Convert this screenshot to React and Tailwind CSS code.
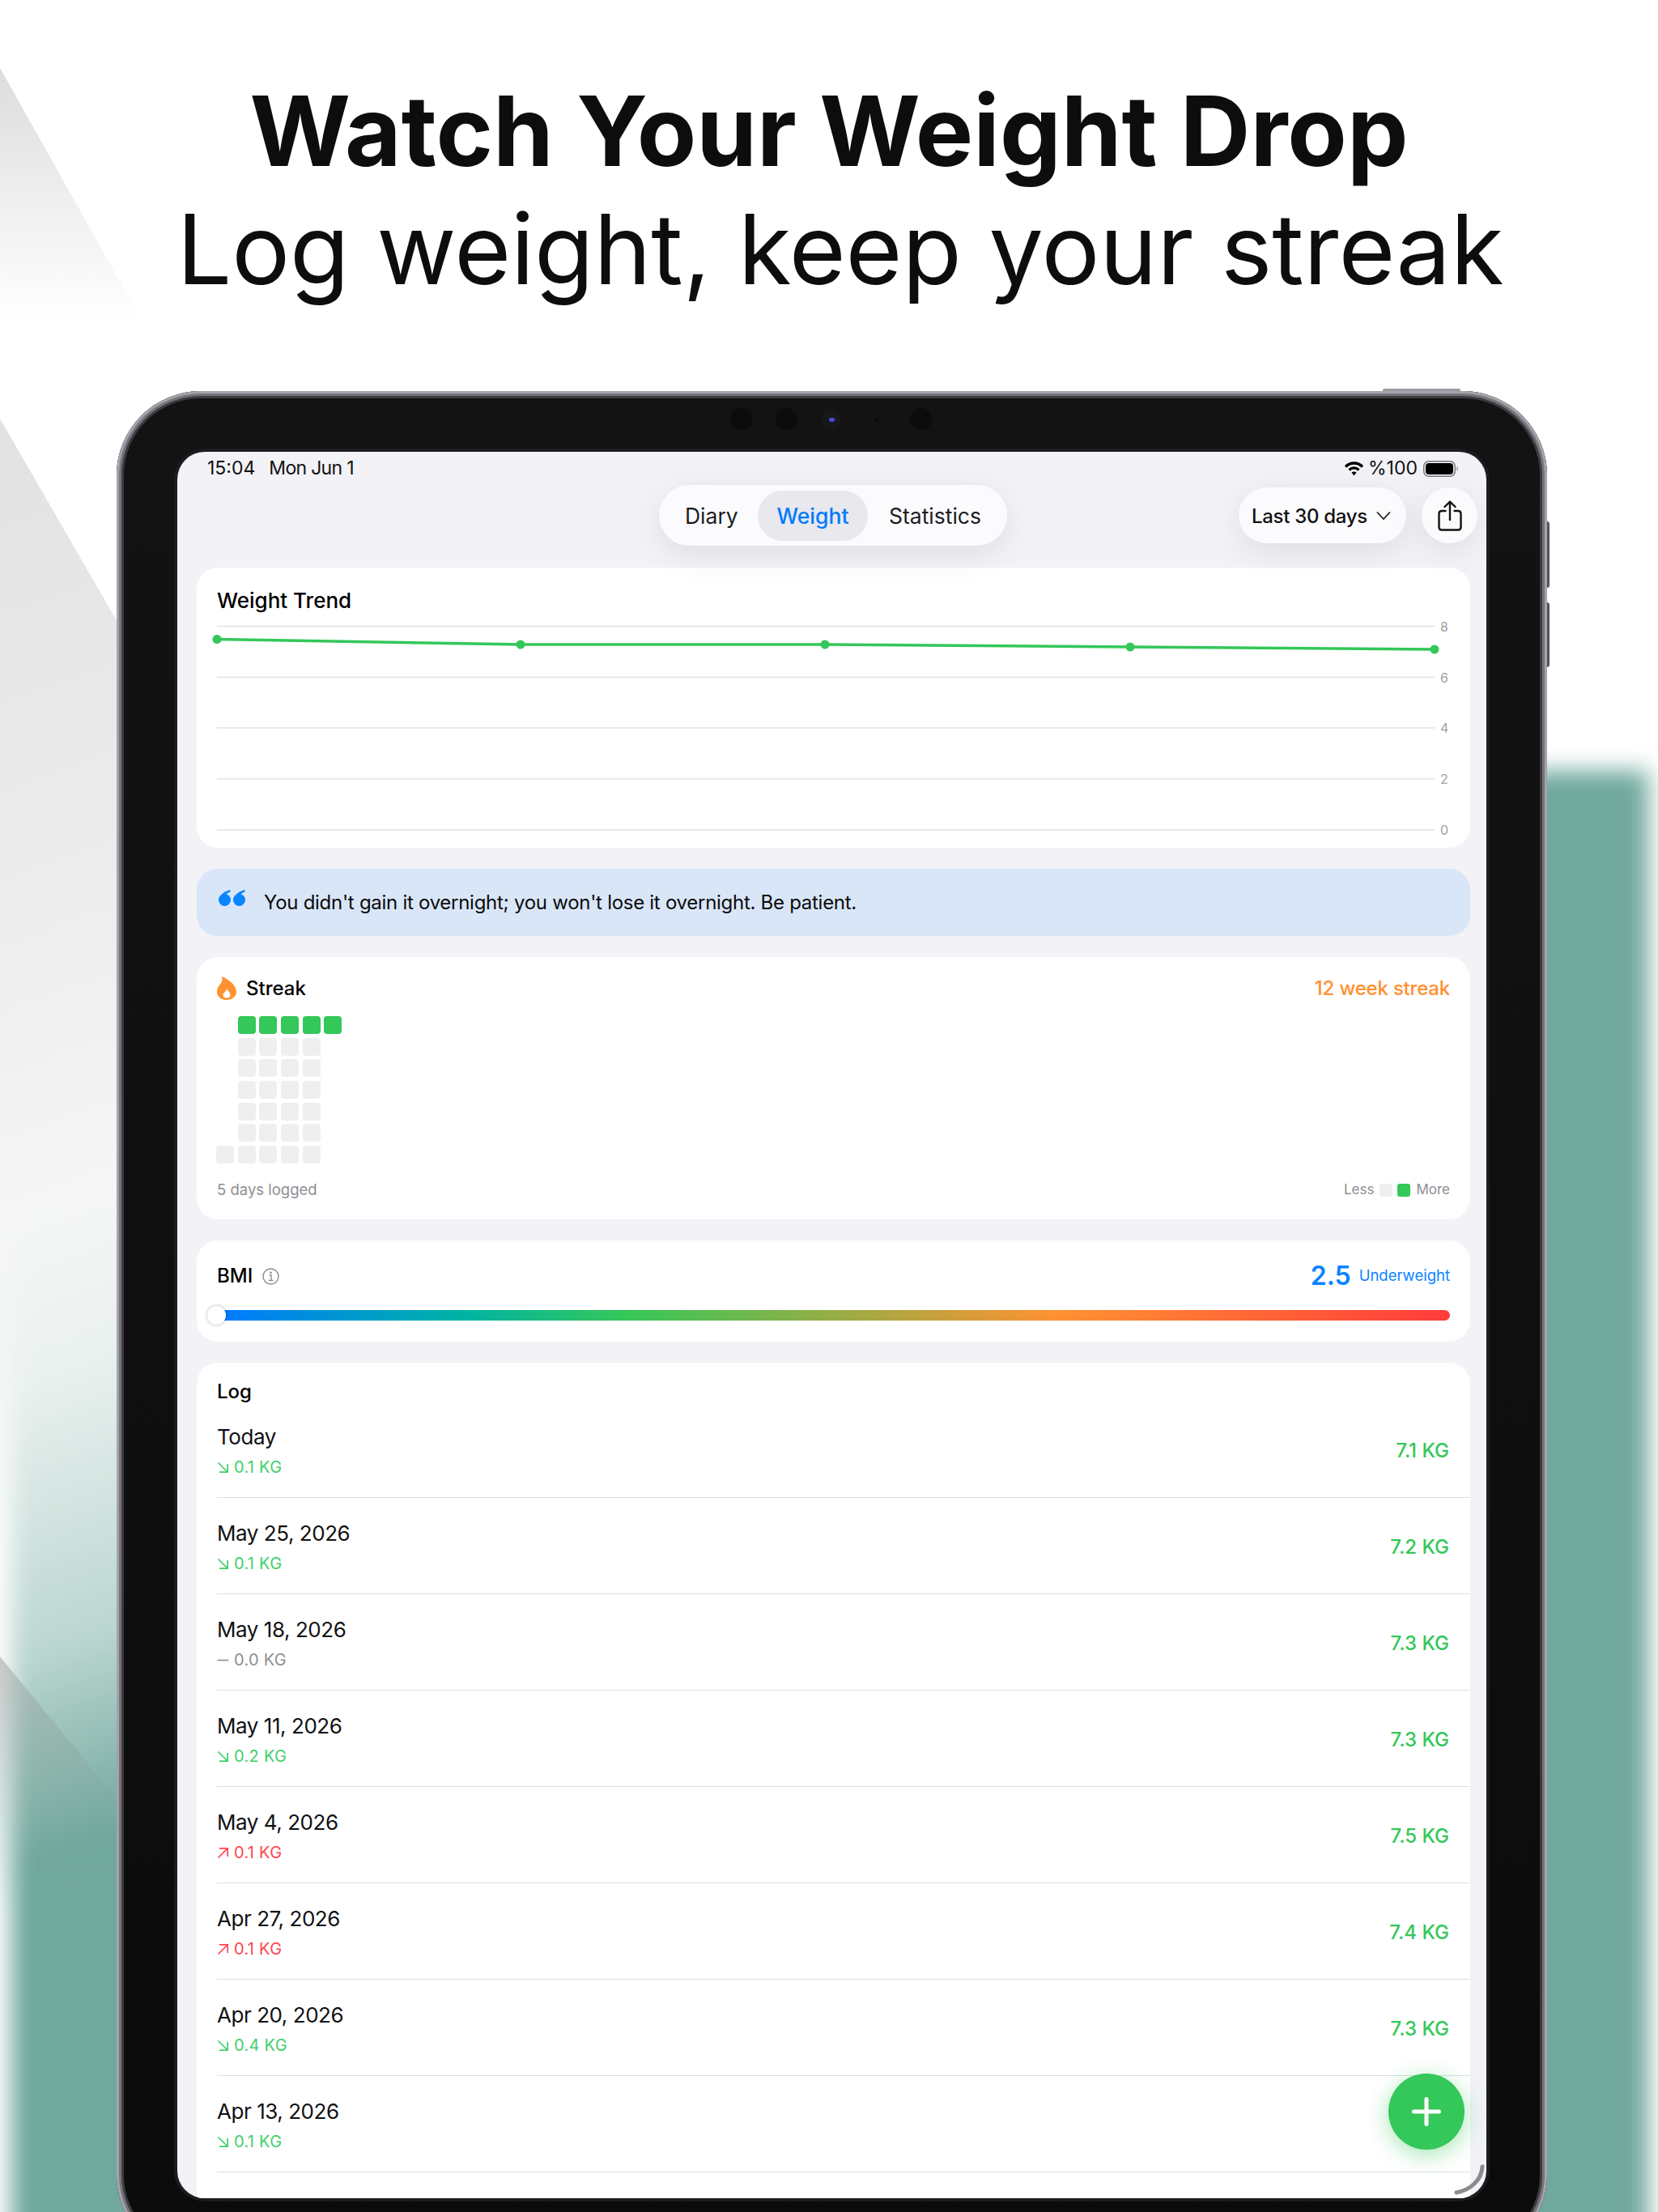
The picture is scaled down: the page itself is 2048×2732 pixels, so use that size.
import React from "react";

const rows = [
  { d: "Today", t: "down", s: "0.1 KG", v: "7.1 KG" },
  { d: "May 25, 2026", t: "down", s: "0.1 KG", v: "7.2 KG" },
  { d: "May 18, 2026", t: "flat", s: "0.0 KG", v: "7.3 KG" },
  { d: "May 11, 2026", t: "down", s: "0.2 KG", v: "7.3 KG" },
  { d: "May 4, 2026", t: "up", s: "0.1 KG", v: "7.5 KG" },
  { d: "Apr 27, 2026", t: "up", s: "0.1 KG", v: "7.4 KG" },
  { d: "Apr 20, 2026", t: "down", s: "0.4 KG", v: "7.3 KG" },
  { d: "Apr 13, 2026", t: "down", s: "0.1 KG", v: "" },
];

function Backdrop() {
  return (
    <svg className="absolute left-0 top-0 block w-[2048px] h-[2732px]" viewBox="0 0 2048 2732">
      <defs>
        <filter id="soft" x="-5%" y="-5%" width="110%" height="110%">
          <feGaussianBlur stdDeviation="14" />
        </filter>
        <linearGradient id="s1" x1="0" y1="84" x2="0" y2="400" gradientUnits="userSpaceOnUse">
          <stop offset="0" stopColor="#dcdcdc" />
          <stop offset="0.6" stopColor="#f2f2f2" />
          <stop offset="1" stopColor="#ffffff" />
        </linearGradient>
        <linearGradient id="s2" x1="0" y1="517" x2="600" y2="2240" gradientUnits="userSpaceOnUse">
          <stop offset="0" stopColor="#e2e2e2" />
          <stop offset="0.3" stopColor="#ececec" />
          <stop offset="0.52" stopColor="#f5f6f6" />
          <stop offset="0.62" stopColor="#f4f7f6" stopOpacity="0.92" />
          <stop offset="0.8" stopColor="#ffffff" stopOpacity="0.52" />
          <stop offset="0.93" stopColor="#ffffff" stopOpacity="0" />
        </linearGradient>
        <linearGradient id="s3" x1="0" y1="2046" x2="60" y2="2360" gradientUnits="userSpaceOnUse">
          <stop offset="0" stopColor="#9a9a9a" stopOpacity="0.5" />
          <stop offset="1" stopColor="#6fa89d" stopOpacity="0" />
        </linearGradient>
      </defs>
      <rect x="0" y="0" width="2048" height="2732" fill="#ffffff" />
      <rect x="14" y="952" width="2022" height="1900" fill="#6fa89d" filter="url(#soft)" />
      <polygon points="0,84 200,440 0,440" fill="url(#s1)" />
      <polygon points="0,517 700,1730 700,2400 0,2400" fill="url(#s2)" />
      <polygon points="0,2046 200,2290 200,2500 0,2500" fill="url(#s3)" />
    </svg>
  );
}

function Chart() {
  const ys = [
    [8, 773.5],
    [6, 836.5],
    [4, 899],
    [2, 962],
    [0, 1025],
  ];
  const pts = [
    [25, 21.5],
    [400, 28],
    [776, 28],
    [1153, 31],
    [1529, 34],
  ];
  return (
    <svg className="block w-[1573px] h-[279px]" viewBox="0 -8 1573 279">
      {ys.map(([l, y]) => (
        <g key={l}>
          <line x1="25" x2="1529" y1={y - 768} y2={y - 768} stroke="#e2e2e4" strokeWidth="1.5" />
          <text x="1536" y={y - 768 + 6} fontSize="16" fill="#a0a0a4" fontFamily="Inter">{l}</text>
        </g>
      ))}
      <polyline points={pts.map((p) => p.join(",")).join(" ")} fill="none" stroke="#34c759" strokeWidth="3.5" />
      {pts.map((p) => (
        <circle key={p[0]} cx={p[0]} cy={p[1]} r="5.5" fill="#34c759" />
      ))}
    </svg>
  );
}

function Arrow({ t }) {
  if (t === "flat")
    return (
      <svg className="block w-[15px] h-[15px]" viewBox="0 0 15 15">
        <line x1="0.5" x2="14.5" y1="7.5" y2="7.5" stroke="#8e8e93" strokeWidth="1.6" />
      </svg>
    );
  const c = t === "up" ? "#ff4550" : "#42cf6b";
  return (
    <svg className="block w-[15px] h-[15px]" viewBox="0 0 15 15" fill="none" stroke={c} strokeWidth="1.7">
      {t === "down" ? <path d="M1.5 1.5 L13 13 M13.2 3 V13.2 H3" /> : <path d="M1.5 13.5 L13 2 M3 1.8 H13.2 V12" />}
    </svg>
  );
}

function Row({ r }) {
  const color = r.t === "flat" ? "text-[#8e8e93]" : r.t === "up" ? "text-[#ff4550]" : "text-[#42cf6b]";
  return (
    <div className="ml-[25px] pr-[26px] h-[119px] border-b-[1.5px] border-[#dedee0] flex justify-between items-center">
      <div className="self-start pt-[27px]">
        <div className="text-[26px] tracking-[-0.45px] leading-[34px] text-[#111113]">{r.d}</div>
        <div className={`mt-[9px] flex items-center gap-[6px] text-[20px] tracking-[0.3px] leading-[23px] ${color}`}>
          <Arrow t={r.t} />
          <span>{r.s}</span>
        </div>
      </div>
      <div className="pt-[3px] text-[24px] font-medium text-[#34c759]">{r.v}</div>
    </div>
  );
}

function Cell({ k }) {
  if (k === 0) return <div className="w-[22px] h-[22px]" />;
  return <div className={`w-[22px] h-[22px] rounded-[4px] ${k === 2 ? "bg-[#34c759]" : "bg-[#efeff0]"}`} />;
}

const grid = [
  [0, 2, 2, 2, 2, 2],
  [0, 1, 1, 1, 1, 0],
  [0, 1, 1, 1, 1, 0],
  [0, 1, 1, 1, 1, 0],
  [0, 1, 1, 1, 1, 0],
  [0, 1, 1, 1, 1, 0],
  [1, 1, 1, 1, 1, 0],
];

export default function App() {
  return (
    <div className="relative w-[2048px] h-[2732px] overflow-hidden bg-white font-['Inter',sans-serif]">
      <Backdrop />
      <div className="relative pt-[89px] text-center text-[#0d0d0d]">
        <h1 className="text-[120px] leading-[146px] font-bold">Watch Your Weight Drop</h1>
        <p className="pl-[28px] text-[120px] leading-[145px] font-normal tracking-[-0.1px]">Log weight, keep your streak</p>
      </div>

      {/* device */}
      <div className="relative mt-[103px] ml-[144px] w-[1767px] h-[2307px]">
        <div className="absolute left-[1564px] top-[-3px] w-[96px] h-[8px] rounded-t-[2px] bg-[#9b9ba0]" />
        <div className="absolute right-[-3px] top-[161px] w-[8px] h-[82px] rounded-r-[3px] bg-[#55555b]" />
        <div className="absolute right-[-3px] top-[261px] w-[8px] h-[80px] rounded-r-[3px] bg-[#55555b]" />
        <div className="relative w-full h-full rounded-[104px] p-[75px] bg-gradient-to-b from-[#131313] to-[#0b0b0b] shadow-[inset_0_0_0_3px_#a4a4aa,inset_0_0_0_6px_#74747a,inset_0_0_0_9px_#3c3c40]">
          {/* cameras */}
          <div className="absolute left-[758px] top-[21px] w-[27px] h-[27px] rounded-full bg-[#0c0c0c]" />
          <div className="absolute left-[814px] top-[21px] w-[27px] h-[27px] rounded-full bg-[#0c0c0c]" />
          <div className="absolute left-[871px] top-[23px] w-[24px] h-[24px] rounded-full bg-[#18181c] flex items-center justify-center">
            <div className="w-[7px] h-[5px] rounded-full bg-[#4a4ad8]" />
          </div>
          <div className="absolute left-[936px] top-[32px] w-[6px] h-[6px] rounded-full bg-[#0c0c0c]" />
          <div className="absolute left-[980px] top-[21px] w-[27px] h-[27px] rounded-full bg-[#0c0c0c]" />

          <div className="relative w-full h-full rounded-[34px] overflow-hidden bg-[#f2f2f7] shadow-[0_0_0_4px_#1c1c1e] text-black">
            {/* status bar */}
            <div className="h-[41px] pl-[37px] pr-[34px] flex items-center justify-between text-[23px] text-[#111]">
              <div className="flex gap-[17px]">
                <span>15:04</span>
                <span className="tracking-[-0.7px]">Mon Jun 1</span>
              </div>
              <div className="flex items-center gap-[5px]">
                <svg className="block w-[25px] h-[20px]" viewBox="0 0 25 20" fill="none" stroke="#000" strokeLinecap="butt">
                  <path d="M2 7.5 C8 1.5 17 1.5 23 7.5" strokeWidth="3.4" />
                  <path d="M6.5 11.5 C10 8 15 8 18.5 11.5" strokeWidth="3.2" />
                  <path d="M12.5 18.5 L9.5 14.5 C11 13.3 14 13.3 15.5 14.5 Z" fill="#000" stroke="none" />
                </svg>
                <span>%100</span>
                <svg className="block ml-[2px] w-[44px] h-[20px]" viewBox="0 0 44 20">
                  <rect x="0.75" y="0.75" width="38.5" height="18.5" rx="6" fill="none" stroke="#77777c" strokeWidth="1.5" />
                  <rect x="3" y="3" width="34" height="14" rx="4" fill="#000" />
                  <path d="M41.5 7 C43 7.5 43 12.5 41.5 13 Z" fill="#77777c" />
                </svg>
              </div>
            </div>

            {/* toolbar */}
            <div className="relative z-10 h-[75px] px-[11px] grid grid-cols-[1fr_auto_1fr] items-center">
              <div />
              <div className="ml-[3px] h-[75px] w-[430px] rounded-full bg-[#fbfbfe] shadow-[0_10px_40px_rgba(0,0,0,0.09)] flex items-center text-[26.5px] text-[#1c1c1e]">
                <span className="ml-[32px] pt-[2px] w-[90px]">Diary</span>
                <div className="h-[62px] w-[136px] pt-[2px] rounded-full bg-[#e8e8ed] flex items-center justify-center font-medium text-[#007aff]">Weight</div>
                <span className="ml-[26px] pt-[2px]">Statistics</span>
              </div>
              <div className="flex justify-end gap-[19px]">
                <div className="h-[69px] w-[207px] rounded-full bg-[#fbfbfe] shadow-[0_10px_40px_rgba(0,0,0,0.09)] flex items-center pl-[16px] gap-[10px] text-[24px] tracking-[-0.3px] font-medium text-[#111]">
                  <span className="pt-[2px]">Last 30 days</span>
                  <svg className="block w-[20px] h-[12px] mt-[1px]" viewBox="0 0 20 12" fill="none" stroke="#1c1c1e" strokeWidth="1.7">
                    <path d="M2 1.5 L10 10 L18 1.5" />
                  </svg>
                </div>
                <div className="h-[69px] w-[69px] rounded-full bg-[#fbfbfe] shadow-[0_10px_40px_rgba(0,0,0,0.09)] flex items-center justify-center">
                  <svg className="block w-[30px] h-[38px]" viewBox="0 0 30 38" fill="none" stroke="#111" strokeWidth="2.4" strokeLinecap="round" strokeLinejoin="round">
                    <path d="M9.5 13 H5 Q1.5 13 1.5 16.5 V33 Q1.5 36.5 5 36.5 H25 Q28.5 36.5 28.5 33 V16.5 Q28.5 13 25 13 H20.5" />
                    <path d="M15 24 V2 M8.5 8 L15 1.5 L21.5 8" />
                  </svg>
                </div>
              </div>
            </div>

            <div className="ml-[24px] mr-[20px] pt-[27px] flex flex-col gap-[26px]">
              {/* trend */}
              <section className="rounded-[26px] bg-white h-[346px]">
                <div className="pl-[25px] pt-[28px] text-[26px] leading-[26px] font-medium">Weight Trend</div>
                <div className="mt-[5px]">
                  <Chart />
                </div>
              </section>

              {/* quote */}
              <section className="h-[83px] rounded-[26px] bg-[#d9e6f7] flex items-center pl-[27px] gap-[23px] text-[24px] tracking-[-0.28px] text-[#0b0b0d]">
                <svg className="block w-[33px] h-[20px] -mt-[12px]" viewBox="0 0 33 20" fill="#0a84ff">
                  <circle cx="7.5" cy="12.5" r="7.5" />
                  <path d="M14.5 0 C8 1.5 1.5 6 0.3 12 L7 8 C9 5 12 3 14.5 2.4 Z" />
                  <circle cx="25.5" cy="12.5" r="7.5" />
                  <path d="M32.5 0 C26 1.5 19.5 6 18.3 12 L25 8 C27 5 30 3 32.5 2.4 Z" />
                </svg>
                <span>You didn't gain it overnight; you won't lose it overnight. Be patient.</span>
              </section>

              {/* streak */}
              <section className="rounded-[26px] bg-white px-[25px] pt-[23px] pb-[23px] h-[324px]">
                <div className="flex items-center justify-between h-[30px]">
                  <div className="flex items-center gap-[12px] text-[24px] font-medium">
                    <svg className="block w-[24px] h-[29px]" viewBox="0 0 24 29">
                      <path d="M6 0 C13 3 24 10 24 19 C24 25 18 29 12 29 C5 29 0 25 0 19 C0 14 3 11 5 8 C6.5 6 7 3 6 0 Z" fill="#ff9230" />
                      <path d="M12.5 15 C13 18 16.5 19.5 16.5 23 C16.5 25.5 14.5 26.5 12 26.5 C9.5 26.5 7.5 25.5 7.5 23 C7.5 20.5 10.5 19.5 12.5 15 Z" fill="#fff" />
                    </svg>
                    <span className="pt-[1px]">Streak</span>
                  </div>
                  <div className="pt-[1px] text-[24px] tracking-[-0.2px] font-medium text-[#ff8f2e]">12 week streak</div>
                </div>
                <div className="-ml-[1px] mt-[20px] grid grid-cols-[repeat(6,22px)] gap-[4.67px] w-fit">
                  {grid.flat().map((k, i) => (
                    <Cell key={i} k={k} />
                  ))}
                </div>
                <div className="mt-[21px] flex items-center justify-between h-[24px]">
                  <span className="text-[18.5px] text-[#8e8e93]">5 days logged</span>
                  <div className="flex items-center text-[17px] text-[#8e8e93]">
                    <span>Less</span>
                    <span className="ml-[7px] w-[16px] h-[16px] rounded-[3px] bg-[#efeff0]" />
                    <span className="ml-[6px] w-[16px] h-[16px] rounded-[3px] bg-[#34c759]" />
                    <span className="ml-[7px]">More</span>
                  </div>
                </div>
              </section>

              {/* bmi */}
              <section className="rounded-[26px] bg-white px-[25px] pt-[24px] h-[125px]">
                <div className="flex items-center justify-between h-[40px]">
                  <div className="flex items-center gap-[12px] text-[24px] font-medium">
                    <span>BMI</span>
                    <svg className="block w-[21px] h-[21px]" viewBox="0 0 21 21" fill="none" stroke="#8e8e93" strokeWidth="1.4">
                      <circle cx="10.5" cy="10.5" r="9.5" />
                      <path d="M8.5 9 H11 V15.5 M8 15.5 H13.5" />
                      <circle cx="10.5" cy="5.8" r="0.7" fill="#8e8e93" />
                    </svg>
                  </div>
                  <div className="flex items-center gap-[10px] text-[#0a84ff]">
                    <span className="text-[32px] font-semibold">2.5</span>
                    <span className="text-[18.5px]">Underweight</span>
                  </div>
                </div>
                <div className="relative mt-[22px] h-[13px]">
                  <div className="h-full rounded-full bg-[linear-gradient(to_right,#007aff_0%,#00b3a4_20%,#34c759_33%,#ff9232_68%,#ff3b3b_100%)]" />
                  <div className="absolute left-[-12px] top-[-5px] w-[23px] h-[23px] rounded-full bg-white shadow-[0_0_4px_rgba(0,0,0,0.3)]" />
                </div>
              </section>

              {/* log */}
              <section className="rounded-t-[26px] bg-white pb-[40px]">
                <div className="pl-[25px] pt-[23px] text-[24px] leading-[25px] font-medium">Log</div>
                {rows.map((r) => (
                  <Row key={r.d} r={r} />
                ))}
              </section>
            </div>

            {/* FAB */}
            <div className="absolute right-[27px] bottom-[60px] w-[94px] h-[94px] rounded-full bg-[#34c759] shadow-[0_6px_28px_rgba(52,199,89,0.45)] flex items-center justify-center">
              <svg className="block w-[36px] h-[36px]" viewBox="0 0 36 36" stroke="#fff" strokeWidth="5" strokeLinecap="round">
                <path d="M18 2.5 V33.5 M2.5 18 H33.5" />
              </svg>
            </div>
            {/* scroll indicator */}
            <svg className="absolute right-[2px] bottom-[4px] block w-[38px] h-[38px]" viewBox="0 0 38 38" fill="none" stroke="#8c8c8c" strokeWidth="5" strokeLinecap="round">
              <path d="M35 3 C34 20 20 32 3 35" />
            </svg>
          </div>
        </div>
      </div>
    </div>
  );
}
